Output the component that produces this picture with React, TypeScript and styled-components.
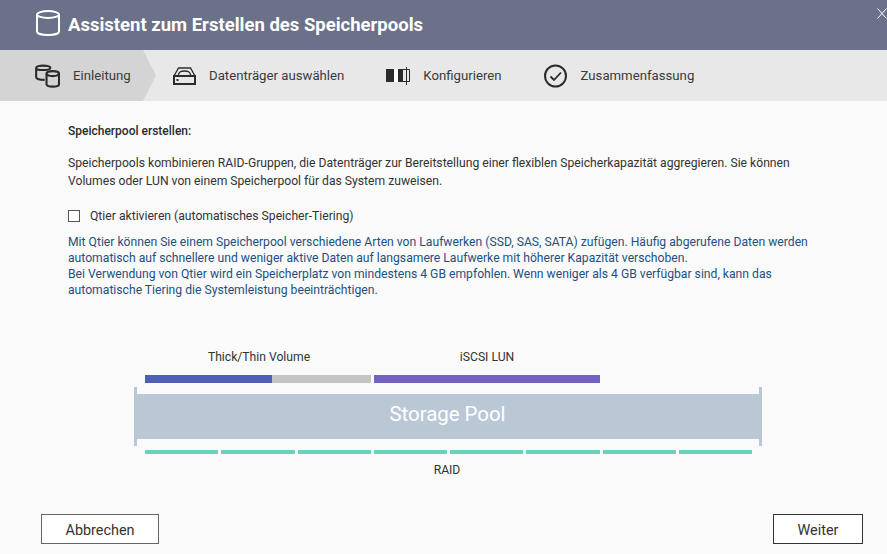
import styled, { createGlobalStyle } from "styled-components";

const GlobalStyle = createGlobalStyle`
  html, body {
    margin: 0;
    padding: 0;
    height: 100%;
    overflow: hidden;
    background: #fafafa;
    font-family: Roboto, "Liberation Sans", sans-serif;
  }
`;

const Page = styled.div`
  width: 887px;
  height: 554px;
  display: flex;
  flex-direction: column;
  background: #fafafa;
  color: #333;
`;

const Header = styled.header`
  height: 50px;
  flex: none;
  display: flex;
  align-items: center;
  gap: 8px;
  padding-left: 36px;
  background: #6b7189;
  position: relative;
`;

const Title = styled.h1`
  margin: 0 0 1px;
  font-size: 18.5px;
  font-weight: 700;
  color: #fff;
`;

const PoolSvg = styled.svg`
  margin-bottom: 5px;
`;

const Close = styled.svg`
  position: absolute;
  top: 8px;
  right: 0;
`;

const Steps = styled.nav`
  height: 51px;
  flex: none;
  display: flex;
  background: #e8e8e8;
`;

const Step = styled.div<{ $active?: boolean }>`
  display: flex;
  align-items: center;
  gap: 13px;
  position: relative;
  box-sizing: border-box;
  font-size: 13.2px;
  color: #3a3a3a;
  width: ${(p) => (p.$active ? "143px" : "auto")};
  margin-right: ${(p) => (p.$active ? "30px" : "42px")};
  padding-left: ${(p) => (p.$active ? "35px" : "0")};
  background: ${(p) => (p.$active ? "#d4d4d4" : "transparent")};

  ${(p) =>
    p.$active &&
    `&::after {
      content: "";
      position: absolute;
      top: 0;
      bottom: 0;
      left: 100%;
      width: 13px;
      background: #d4d4d4;
      clip-path: polygon(0 0, 100% 50%, 0 100%);
    }`}
`;

const Main = styled.main`
  flex: 1;
  padding: 23px 0 0 68px;
  font-size: 12.16px;
`;

const Heading = styled.div`
  font-size: 12px;
  font-weight: 500;
  line-height: 14px;
  color: #2b2b2b;
`;

const Paragraph = styled.p`
  margin: 16px 0 0;
  line-height: 18px;
`;

const CheckRow = styled.label`
  display: flex;
  align-items: center;
  gap: 10px;
  margin-top: 17px;
  line-height: 18px;
`;

const Box = styled.span`
  width: 12px;
  height: 12px;
  box-sizing: border-box;
  border: 1px solid #555;
  background: #fff;
`;

const Note = styled.p`
  margin: 9px 0 0;
  line-height: 16px;
  color: #1f5080;
`;

const Diagram = styled.section`
  width: 628px;
  margin: 50px 0 0 66px;
  display: flex;
  flex-direction: column;
`;

const VolumeLabels = styled.div`
  display: flex;
  padding-left: 11px;
  height: 16px;
  line-height: 18px;
`;

const VolumeLabel = styled.span<{ $width: number }>`
  width: ${(p) => p.$width}px;
  text-align: center;
`;

const VolumeBars = styled.div`
  display: flex;
  height: 8px;
  margin: 11px 0 4px 11px;
`;

const VolumeBar = styled.div<{ $width: number; $color: string; $gap?: number }>`
  width: ${(p) => p.$width}px;
  margin-right: ${(p) => p.$gap ?? 0}px;
  background: ${(p) => p.$color};
`;

const PoolFrame = styled.div`
  height: 59px;
  box-sizing: border-box;
  display: flex;
  align-items: center;
  border-left: 3px solid #bac8d6;
  border-right: 3px solid #bac8d6;
`;

const PoolFill = styled.div`
  flex: 1;
  height: 45px;
  box-sizing: border-box;
  display: flex;
  align-items: center;
  justify-content: center;
  padding: 0 1px 6px 0;
  background: #bac8d6;
  color: #fff;
  font-size: 20.4px;
  font-weight: 400;
`;

const RaidBars = styled.div`
  display: flex;
  gap: 3px;
  height: 4px;
  width: 607px;
  margin: 4px 0 0 11px;
`;

const RaidBar = styled.div`
  flex: 1;
  background: #68d2bf;
`;

const RaidLabel = styled.div`
  margin-top: 8px;
  line-height: 16px;
  text-align: center;
  padding-right: 2px;
`;

const Footer = styled.footer`
  flex: none;
  display: flex;
  justify-content: space-between;
  padding: 0 24px 10px 41px;
`;

const Button = styled.button<{ $primary?: boolean }>`
  height: 30px;
  width: ${(p) => (p.$primary ? "90px" : "118px")};
  box-sizing: border-box;
  padding: 2px 0 0;
  background: #fff;
  border: 1px solid ${(p) => (p.$primary ? "#333" : "#666")};
  border-radius: 0;
  font-family: inherit;
  font-size: 14.4px;
  color: #333;
`;

const CloseIcon = () => (
  <Close width="10" height="11" viewBox="0 0 10 11">
    <path d="M0.5 0.5 L9.5 10.5 M9.5 0.5 L0.5 10.5" stroke="#fff" strokeWidth="1" fill="none" />
  </Close>
);

const PoolIcon = () => (
  <PoolSvg width="24" height="26" viewBox="0 0 24 26" fill="none" stroke="#fff" strokeWidth="2">
    <ellipse cx="12" cy="4.5" rx="11" ry="3.4" />
    <path d="M1 4.5 V21.5 C1 23.6 6 25 12 25 C18 25 23 23.6 23 21.5 V4.5" />
  </PoolSvg>
);

const PoolsIcon = () => (
  <svg width="25" height="24" viewBox="0 0 26 24" fill="none" stroke="#2b2b2b" strokeWidth="2.2">
    <path d="M10 16 C5 16 1.2 15 1.2 13 V3.6 C1.2 2 4.5 1.2 8.5 1.2 C12.5 1.2 16 2 16 3.6 C16 5 12.5 5.8 8.5 5.8 C4.5 5.8 1.2 5 1.2 3.6" />
    <path d="M12 9.5 V20.5 C12 22.2 15 23 18.5 23 C22 23 25 22.2 25 20.5 V9.5" fill="#d4d4d4" />
    <ellipse cx="18.5" cy="9.5" rx="6.5" ry="2.6" fill="#d4d4d4" />
  </svg>
);

const DiskIcon = () => (
  <svg width="23" height="18" viewBox="0 0 23 18" fill="none" stroke="#2b2b2b" strokeWidth="1.3">
    <path d="M1 9 L5.5 1 H17.5 L22 9" />
    <path d="M5 9 C6 4.5 8 4 11.5 4 C15 4 17 4.5 18 9" />
    <rect x="1" y="9" width="21" height="8" strokeWidth="2" />
    <rect x="3.5" y="12" width="2" height="2" fill="#2b2b2b" stroke="none" />
  </svg>
);

const ConfigIcon = () => (
  <svg width="24" height="18" viewBox="0 0 24 18">
    <rect x="0" y="2" width="8" height="13" fill="#2b2b2b" />
    <rect x="8" y="2" width="4" height="13" fill="#fff" />
    <rect x="12" y="2" width="5" height="13" fill="#2b2b2b" />
    <path d="M17 2.5 H23.5 V14.5 H17" fill="none" stroke="#2b2b2b" />
    <path d="M20.5 0 V18" stroke="#2b2b2b" />
  </svg>
);

const CheckIcon = () => (
  <svg width="24" height="24" viewBox="0 0 24 24" fill="none" stroke="#2b2b2b">
    <circle cx="11.5" cy="12" r="10.5" strokeWidth="2" />
    <path d="M6.5 12.5 L10 16 L17 8.5" strokeWidth="1.8" />
  </svg>
);

const raid = Array.from({ length: 8 }, (_, i) => i);

export default function App() {
  return (
    <Page>
      <GlobalStyle />
      <Header>
        <PoolIcon />
        <Title>Assistent zum Erstellen des Speicherpools</Title>
        <CloseIcon />
      </Header>
      <Steps>
        <Step $active>
          <PoolsIcon />
          Einleitung
        </Step>
        <Step>
          <DiskIcon />
          Datenträger auswählen
        </Step>
        <Step>
          <ConfigIcon />
          Konfigurieren
        </Step>
        <Step>
          <CheckIcon />
          Zusammenfassung
        </Step>
      </Steps>
      <Main>
        <Heading>Speicherpool erstellen:</Heading>
        <Paragraph>
          Speicherpools kombinieren RAID-Gruppen, die Datenträger zur Bereitstellung einer flexiblen Speicherkapazität aggregieren. Sie können
          <br />
          Volumes oder LUN von einem Speicherpool für das System zuweisen.
        </Paragraph>
        <CheckRow>
          <Box />
          Qtier aktivieren (automatisches Speicher-Tiering)
        </CheckRow>
        <Note>
          Mit Qtier können Sie einem Speicherpool verschiedene Arten von Laufwerken (SSD, SAS, SATA) zufügen. Häufig abgerufene Daten werden
          <br />
          automatisch auf schnellere und weniger aktive Daten auf langsamere Laufwerke mit höherer Kapazität verschoben.
          <br />
          Bei Verwendung von Qtier wird ein Speicherplatz von mindestens 4 GB empfohlen. Wenn weniger als 4 GB verfügbar sind, kann das
          <br />
          automatische Tiering die Systemleistung beeinträchtigen.
        </Note>
        <Diagram>
          <VolumeLabels>
            <VolumeLabel $width={228}>Thick/Thin Volume</VolumeLabel>
            <VolumeLabel $width={228}>iSCSI LUN</VolumeLabel>
          </VolumeLabels>
          <VolumeBars>
            <VolumeBar $width={127} $color="#4d60b5" />
            <VolumeBar $width={99} $color="#c4c4c4" $gap={3} />
            <VolumeBar $width={226} $color="#7461c2" />
          </VolumeBars>
          <PoolFrame>
            <PoolFill>Storage Pool</PoolFill>
          </PoolFrame>
          <RaidBars>
            {raid.map((i) => (
              <RaidBar key={i} />
            ))}
          </RaidBars>
          <RaidLabel>RAID</RaidLabel>
        </Diagram>
      </Main>
      <Footer>
        <Button>Abbrechen</Button>
        <Button $primary>Weiter</Button>
      </Footer>
    </Page>
  );
}
